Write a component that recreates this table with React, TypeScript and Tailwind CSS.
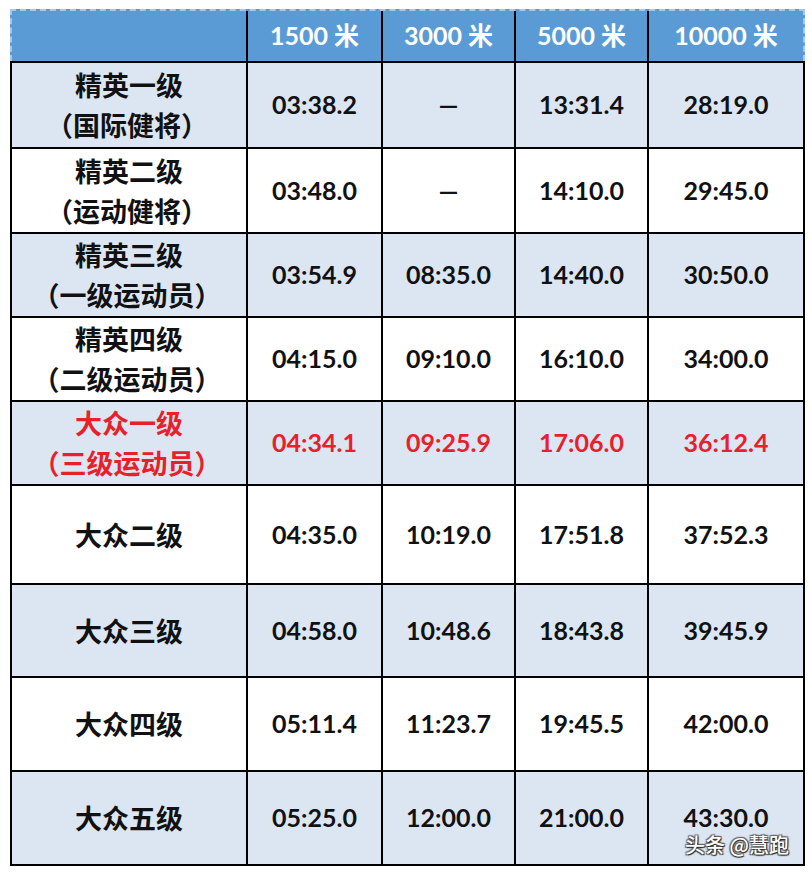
import React from 'react';

type Row = {
  name: string;
  sub?: string;
  times: string[];
  h: string;
  shaded: boolean;
  red?: boolean;
};

const rows: Row[] = [
  { name: '精英一级', sub: '（国际健将）', times: ['03:38.2', '—', '13:31.4', '28:19.0'], h: 'h-[86px]', shaded: true },
  { name: '精英二级', sub: '（运动健将）', times: ['03:48.0', '—', '14:10.0', '29:45.0'], h: 'h-[85px]', shaded: false },
  { name: '精英三级', sub: '（一级运动员）', times: ['03:54.9', '08:35.0', '14:40.0', '30:50.0'], h: 'h-[84px]', shaded: true },
  { name: '精英四级', sub: '（二级运动员）', times: ['04:15.0', '09:10.0', '16:10.0', '34:00.0'], h: 'h-[84px]', shaded: false },
  { name: '大众一级', sub: '（三级运动员）', times: ['04:34.1', '09:25.9', '17:06.0', '36:12.4'], h: 'h-[84px]', shaded: true, red: true },
  { name: '大众二级', times: ['04:35.0', '10:19.0', '17:51.8', '37:52.3'], h: 'h-[99px]', shaded: false },
  { name: '大众三级', times: ['04:58.0', '10:48.6', '18:43.8', '39:45.9'], h: 'h-[93px]', shaded: true },
  { name: '大众四级', times: ['05:11.4', '11:23.7', '19:45.5', '42:00.0'], h: 'h-[94px]', shaded: false },
  { name: '大众五级', times: ['05:25.0', '12:00.0', '21:00.0', '43:30.0'], h: 'h-[94px]', shaded: true },
];

const widths = ['w-[238px]', 'w-[135px]', 'w-[133px]', 'w-[133px]', 'w-[156px]'];
// header cells exclude the 2px black divider that follows them
const headWidths = ['w-[234px]', 'w-[133px]', 'w-[131px]', 'w-[131px]'];
const heads = ['1500 米', '3000 米', '5000 米', '10000 米'];

const cjk = { fontFamily: '"Noto Sans CJK SC", sans-serif' };
const num = { fontFamily: 'Lato, "Noto Sans CJK SC", sans-serif' };

const App = () => {
  return (
    <div className="relative min-h-[874px] w-[812px] bg-white pt-[9px] pl-[10px]">
      <div className="w-[795px]">
        {/* header */}
        <div className="flex h-[52px] bg-[#5b9bd5] border-t-2 border-x-2 border-dashed border-[#a8c8ea]">
          <div className={headWidths[0]} />
          {heads.map((t, i) => (
            <React.Fragment key={t}>
              <div className="w-[2px] bg-black" />
              <div
                className={`${i === 3 ? 'flex-1' : headWidths[i + 1]} flex items-center justify-center text-white font-bold text-[25px]`}
                style={num}
              >
                {t}
              </div>
            </React.Fragment>
          ))}
        </div>
        <div className="h-[2px] bg-black" />

        {rows.map((r) => {
          const color = r.red ? 'text-[#e8202a]' : 'text-[#111]';
          const bg = r.shaded ? 'bg-[#dce6f2]' : 'bg-white';
          return (
            <div key={r.name} className={`flex ${r.h} ${bg} border-b-2 border-black`}>
              <div
                className={`${widths[0]} border-l-2 border-r-2 border-black flex flex-col items-center justify-center font-bold text-[27px] leading-[40px] ${color}`}
                style={cjk}
              >
                <span>{r.name}</span>
                {r.sub && <span className="-ml-[4px]">{r.sub}</span>}
              </div>
              {r.times.map((t, i) => (
                <div
                  key={i}
                  className={`${widths[i + 1]} border-r-2 border-black flex items-center justify-center font-bold text-[25px] ${color}`}
                  style={num}
                >
                  {t}
                </div>
              ))}
            </div>
          );
        })}
      </div>

      <div
        className="absolute left-[685px] top-[831px] text-[20px] leading-[28px] font-medium text-white"
        style={{ ...cjk, textShadow: '1px 1px 1px #222, -1px -1px 1px #666, 1px -1px 1px #555, -1px 1px 1px #555' }}
      >
        头条 @慧跑
      </div>
    </div>
  );
};

export default App;
